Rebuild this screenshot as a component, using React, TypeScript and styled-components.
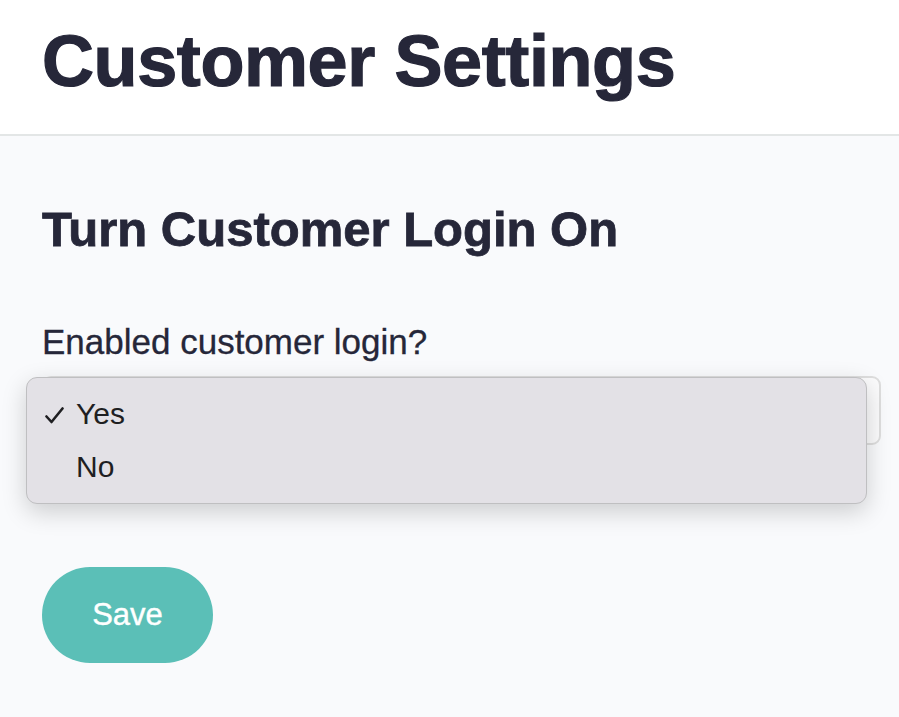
import React from 'react';
import styled, { createGlobalStyle } from 'styled-components';

const GlobalStyle = createGlobalStyle`
  html, body {
    margin: 0;
    padding: 0;
    background: #f9fafc;
  }
  body {
    font-family: 'Liberation Sans', Arial, sans-serif;
    color: #262739;
  }
`;

const options = [
  { label: 'Yes', selected: true },
  { label: 'No', selected: false },
];

const CheckIcon = () => (
  <svg width="19" height="17" viewBox="0 0 19 17" fill="none">
    <path d="M1.5 9.5 L6.5 15 L17.5 1.5" stroke="#1f1f22" strokeWidth="2.6" strokeLinecap="round" strokeLinejoin="round" />
  </svg>
);

const App = () => {
  return (
    <>
      <GlobalStyle />
      <Page>
        <Header>
          <PageTitle>Customer Settings</PageTitle>
        </Header>
        <Main>
          <SectionTitle>Turn Customer Login On</SectionTitle>
          <Label>Enabled customer login?</Label>
          <SelectWrap>
            <SelectBox />
            <Popup role="listbox">
              {options.map((o) => (
                <Option key={o.label} aria-selected={o.selected}>
                  <Check>{o.selected && <CheckIcon />}</Check>
                  {o.label}
                </Option>
              ))}
            </Popup>
          </SelectWrap>
          <SaveButton>Save</SaveButton>
        </Main>
      </Page>
    </>
  );
};

export default App;

const Page = styled.div`
  min-height: 717px;
  display: flex;
  flex-direction: column;
`;

const Header = styled.header`
  background: #ffffff;
  height: 136px;
  box-sizing: border-box;
  padding: 25px 42px 0;
  border-bottom: 2px solid #e3e6e6;
`;

const PageTitle = styled.h1`
  margin: 0;
  font-size: 72px;
  line-height: 1;
  font-weight: 700;
  letter-spacing: -0.4px;
  -webkit-text-stroke: 1.2px #262739;
  color: #262739;
`;

const Main = styled.main`
  flex: 1;
  background: #f9fafc;
  padding: 69px 18px 0 42px;
  display: flex;
  flex-direction: column;
  align-items: flex-start;
`;

const SectionTitle = styled.h2`
  margin: 0;
  font-size: 49px;
  line-height: 1;
  font-weight: 700;
  -webkit-text-stroke: 0.8px #262739;
  color: #262739;
`;

const Label = styled.label`
  margin-top: 70px;
  font-size: 35px;
  line-height: 1;
  -webkit-text-stroke: 0.3px #262739;
  color: #262739;
`;

const SelectWrap = styled.div`
  position: relative;
  align-self: stretch;
  margin-top: 17px;
`;

const SelectBox = styled.div`
  height: 69px;
  box-sizing: border-box;
  border: 2px solid #dedede;
  border-radius: 9px;
  background: #fbfbfc;
`;

const Popup = styled.ul`
  position: absolute;
  top: 1px;
  left: -16px;
  right: 14px;
  margin: 0;
  padding: 9px 0 10px;
  list-style: none;
  box-sizing: border-box;
  background: #e3e1e6;
  border: 1px solid #bfbfc1;
  border-radius: 11px;
  box-shadow: 0 8px 24px rgba(0, 0, 0, 0.18);
  font-family: 'Liberation Sans', Arial, sans-serif;
`;

const Option = styled.li`
  display: flex;
  align-items: center;
  height: 53px;
  font-size: 30px;
  color: #1f1f22;
`;

const Check = styled.span`
  width: 49px;
  box-sizing: border-box;
  padding-left: 18px;
  display: flex;
  align-items: center;
  padding-top: 4px;
`;

const SaveButton = styled.button`
  margin-top: 122px;
  width: 171px;
  height: 96px;
  border: none;
  border-radius: 48px;
  background: #5bbfb7;
  color: #ffffff;
  font-family: 'Liberation Sans', Arial, sans-serif;
  font-size: 31px;
  font-weight: 400;
  -webkit-text-stroke: 0.4px #ffffff;
  cursor: pointer;
`;
